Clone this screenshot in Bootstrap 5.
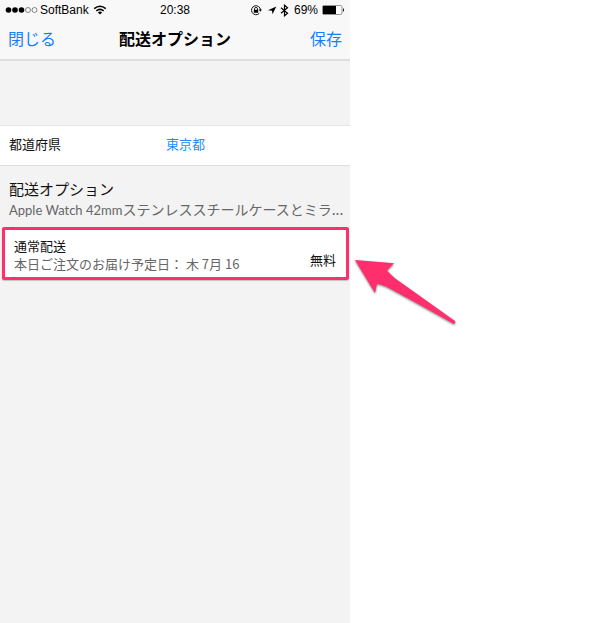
<!DOCTYPE html>
<html lang="ja">
<head>
<meta charset="utf-8">
<meta name="viewport" content="width=device-width, initial-scale=1">
<title>配送オプション</title>
<link href="https://cdn.jsdelivr.net/npm/bootstrap@5.3.0/dist/css/bootstrap.min.css" rel="stylesheet">
<style>
  body { font-family: "Noto Sans CJK JP", sans-serif; background: #fff; color: #111; }
  .screen { background: #f3f3f3; }
  .topbar { background: #f8f8f8; border-bottom: 2px solid #dedede; }
  .status { height: 20px; padding: 0 5px; font: 12px/20px "Liberation Sans", sans-serif; color: #000; }
  .status svg { display: block; }
  .side { flex: 1 1 0; }
  .titlebar { height: 39px; padding: 0 8px; }
  .titlebar h1 { font-size: 16px; line-height: 36px; font-weight: 700; color: #000; }
  .act { border: 0; background: none; padding: 0; font-size: 16px; line-height: 36px; color: #167efb; }
  .form-part { padding-top: 64px; }
  .pref { height: 41px; padding: 0 9px 4px; background: #fff; border-top: 1px solid #e6e6e6; border-bottom: 1px solid #dedede; font-size: 13px; line-height: 36px; }
  .pref label { width: 157px; }
  .pref select { appearance: none; border: 0; background: none; padding: 0; color: #1e8ffa; line-height: 20px; }
  .group-head { padding: 13px 0 0 9px; }
  .group-head h2 { font-size: 15px; line-height: 20px; font-weight: 400; }
  .group-head p { font-size: 14px; line-height: 20px; color: #666; white-space: nowrap; }
  .latin { font-family: Lato, sans-serif; font-size: 13px; }
  .option { margin: 7px 1px 0 2px; padding: 7px 10px 4px 9px; border: 3px solid #ff2f6d; border-radius: 2px; background: #fff; font-size: 13px; line-height: 18px; color: #111; box-shadow: 0 1px 1px rgba(0,0,0,.2); }
  .option .eta { color: #666; }
  .pointer { position: absolute; left: 350px; top: 252px; pointer-events: none; filter: drop-shadow(0 1px 1px rgba(0,0,0,.5)); }
</style>
<script src="https://cdn.jsdelivr.net/npm/bootstrap@5.3.0/dist/js/bootstrap.bundle.min.js"></script>
</head>
<body>
<div class="container-fluid p-0 position-relative">
  <div class="row g-0">
    <main class="col-7 screen min-vh-100">
      <header class="topbar">
        <div class="status d-flex align-items-center">
          <div class="side d-flex align-items-center">
            <svg width="35" height="8" viewBox="0 0 35 8" aria-hidden="true">
              <g fill="#000"><circle cx="3.5" cy="4" r="2.8"/><circle cx="10" cy="4" r="2.8"/><circle cx="16.5" cy="4" r="2.8"/></g>
              <g fill="none" stroke="#555" stroke-width=".7"><circle cx="23" cy="4" r="2.5"/><circle cx="29.5" cy="4" r="2.5"/></g>
            </svg>
            <span>SoftBank</span>
            <svg class="ms-1" width="14" height="10" viewBox="0 0 14 10" aria-hidden="true">
              <g fill="none" stroke="#000" stroke-width="1.5"><path d="M1.2 3.6Q7-1.2 12.8 3.6"/><path d="M3.3 5.9Q7 2.8 10.7 5.9"/></g>
              <path d="M4.9 7.4Q7 5.8 9.1 7.4L7 9.6Z"/>
            </svg>
          </div>
          <div>20:38</div>
          <div class="side d-flex align-items-center justify-content-end">
            <svg class="me-1" width="40" height="13" viewBox="0 0 40 13" aria-hidden="true">
              <g fill="none" stroke="#111"><path d="M9.3 9.3A4.5 4.5 0 1 1 10.5 6" stroke-width="1"/><path d="M4.5 6V4.9a1.5 1.5 0 0 1 3 0V6" stroke-width=".9"/></g>
              <path d="M3.8 5.7H8.2V8.8H3.8ZM8.8 5.5H11.9L10.3 7.8Z"/>
              <path d="M26.3 2.5L22.5 10.2L22 6.8L18 6.3Z"/>
              <path d="M31 3.8L37.5 9.2L34.5 11.8V1.2L37.5 3.8L31 9.2" fill="none" stroke="#000" stroke-width="1.2"/>
            </svg>
            <span>69%</span>
            <svg class="ms-1" width="23" height="10" viewBox="0 0 23 10" aria-hidden="true">
              <rect x=".5" y=".5" width="19.5" height="9" rx="1.5" fill="#fff" stroke="#777" stroke-width=".8"/>
              <path d="M1 1H14V9H1ZM21 3Q23 5 21 7Z"/>
            </svg>
          </div>
        </div>
        <div class="titlebar d-flex justify-content-between align-items-start">
          <button type="button" class="act side text-start">閉じる</button>
          <h1 class="m-0">配送オプション</h1>
          <button type="button" class="act side text-end">保存</button>
        </div>
      </header>
      <section class="form-part">
        <div class="pref d-flex align-items-center">
          <label for="pref">都道府県</label>
          <select id="pref"><option>東京都</option></select>
        </div>
      </section>
      <section>
        <div class="group-head">
          <h2 class="m-0">配送オプション</h2>
          <p class="m-0"><span class="latin">Apple Watch 42mm</span>ステンレススチールケースとミラ...</p>
        </div>
        <div class="d-grid">
          <button type="button" class="option d-flex justify-content-between align-items-end text-start">
            <span><span class="d-block">通常配送</span><span class="d-block eta">本日ご注文のお届け予定日： 木 7月 16</span></span>
            <span class="pb-1">無料</span>
          </button>
        </div>
      </section>
    </main>
  </div>
  <svg class="pointer" width="112" height="80" viewBox="0 0 112 80" aria-hidden="true">
    <path d="M5 8L44 11.3L37 18.5Q40 22 46 27L105 69Q106 71 104 72Q65 50 37 35Q30 32 27 32L25 41Z" fill="#ff2f6d"/>
  </svg>
</div>
</body>
</html>
